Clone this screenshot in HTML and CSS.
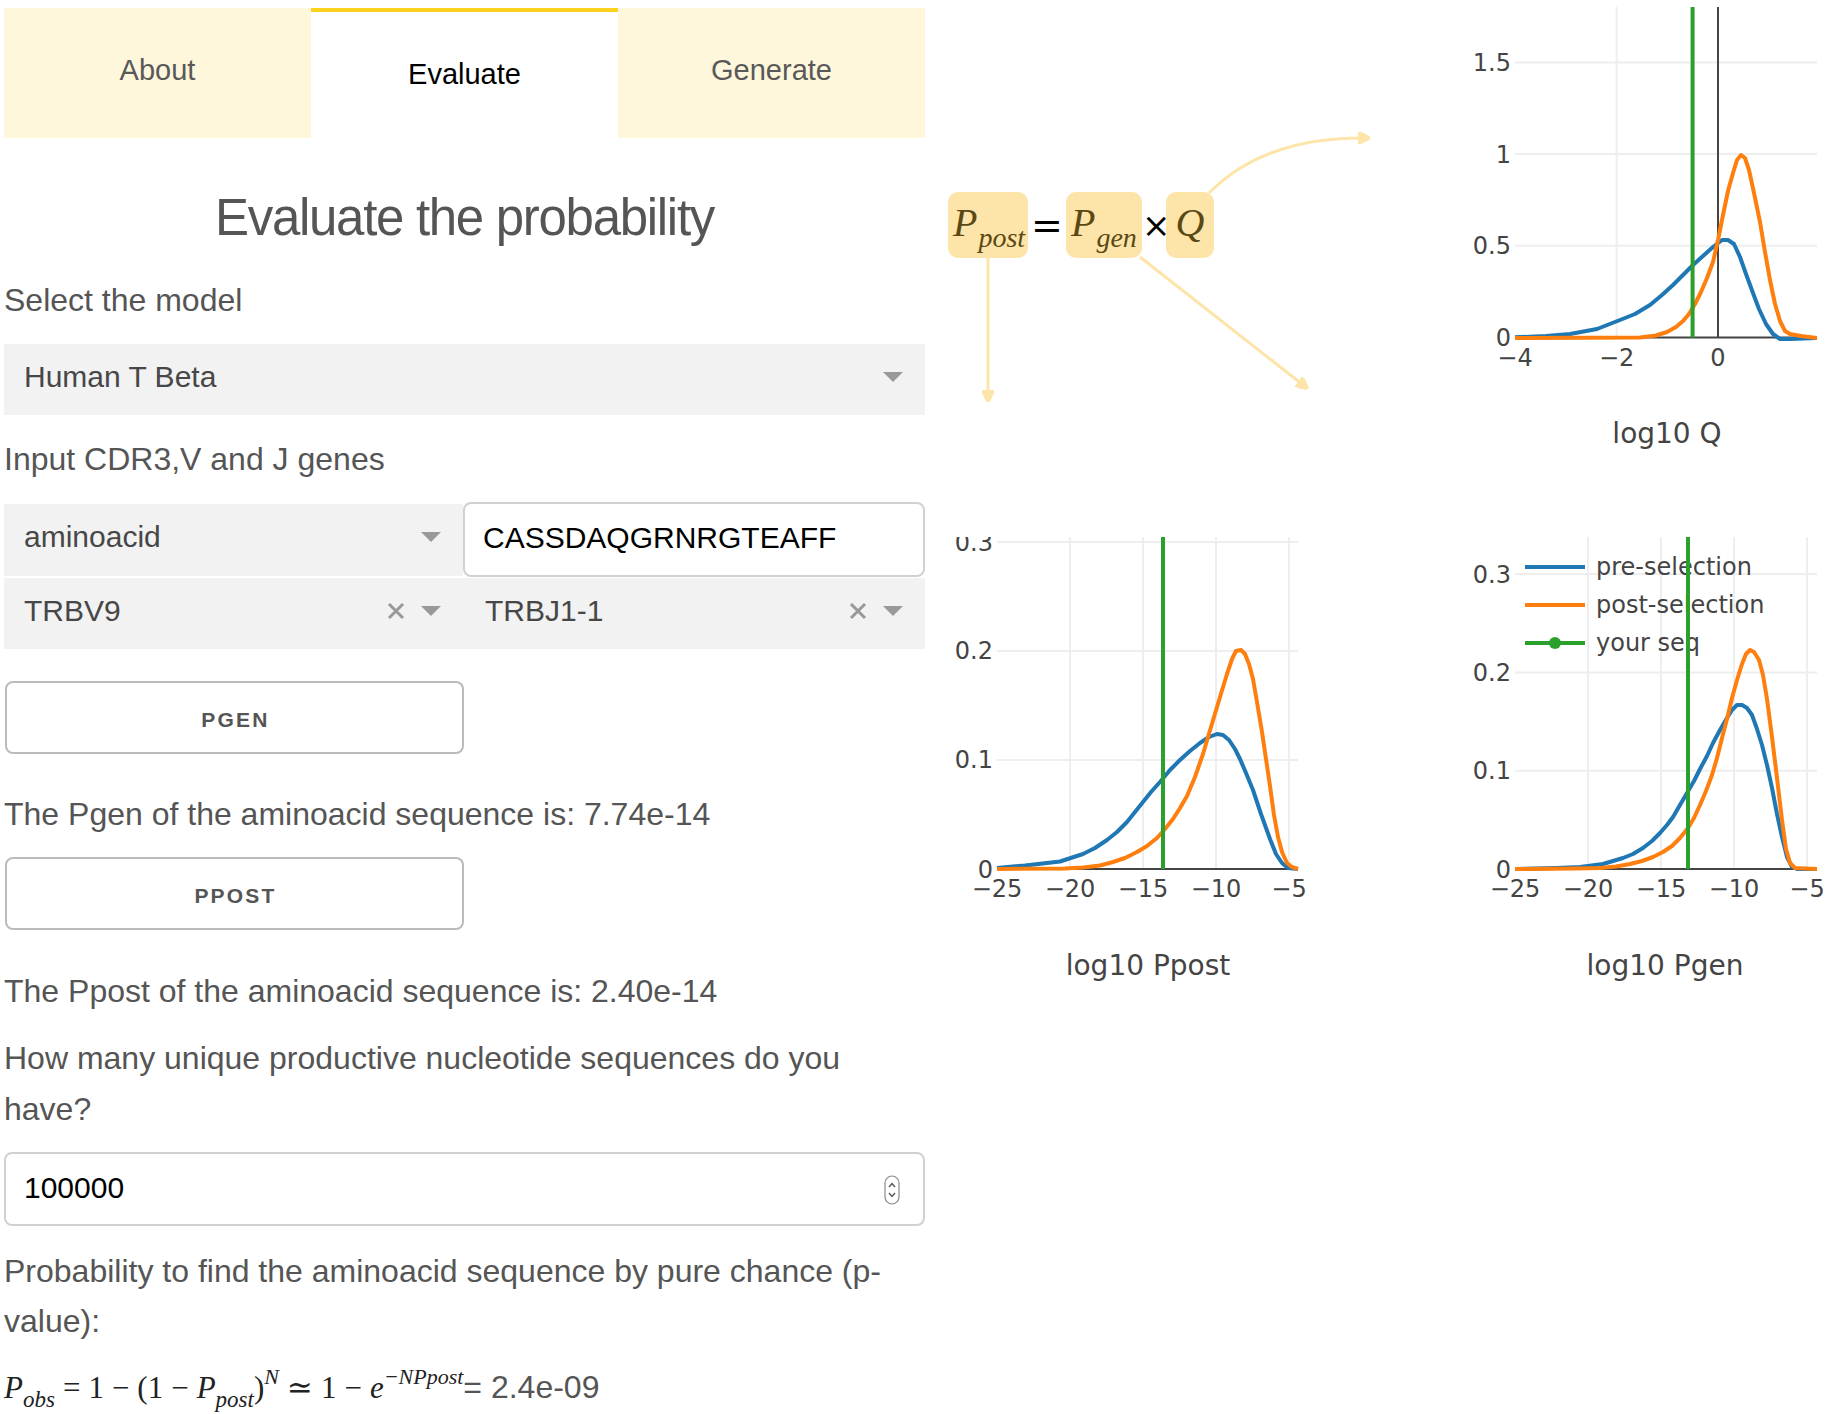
FILE: index.html
```html
<!DOCTYPE html>
<html lang="en">
<head>
<meta charset="utf-8">
<title>Evaluate the probability</title>
<link rel="stylesheet" href="styles.css">
</head>
<body>
<div class="page">
  <main class="left">
    <nav class="tabs">
      <div class="tab">About</div>
      <div class="tab tab--active">Evaluate</div>
      <div class="tab">Generate</div>
    </nav>

    <h4 class="title">Evaluate the probability</h4>

    <p class="text text--model">Select the model</p>
    <div class="select select--model">
      <span class="select__value">Human T Beta</span>
      <span class="select__arrow"></span>
    </div>

    <p class="text text--genes">Input CDR3,V and J genes</p>
    <div class="genes">
      <div class="genes__row genes__row--seq">
        <div class="select select--half">
          <span class="select__value">aminoacid</span>
          <span class="select__arrow"></span>
        </div>
        <input class="field field--seq" type="text" value="CASSDAQGRNRGTEAFF">
      </div>
      <div class="genes__row genes__row--vj">
        <div class="select select--half">
          <span class="select__value">TRBV9</span>
          <svg class="select__clear" width="18" height="18" viewBox="0 0 18 18"><path d="M2 2L16 16M16 2L2 16"/></svg>
          <span class="select__arrow"></span>
        </div>
        <div class="select select--half">
          <span class="select__value">TRBJ1-1</span>
          <svg class="select__clear" width="18" height="18" viewBox="0 0 18 18"><path d="M2 2L16 16M16 2L2 16"/></svg>
          <span class="select__arrow"></span>
        </div>
      </div>
    </div>

    <button class="btn btn--pgen" type="button">Pgen</button>
    <p class="text text--result">The Pgen of the aminoacid sequence is: 7.74e-14</p>

    <button class="btn btn--ppost" type="button">Ppost</button>
    <p class="text text--result text--result-post">The Ppost of the aminoacid sequence is: 2.40e-14</p>

    <p class="text text--question">How many unique productive nucleotide sequences do you have?</p>
    <div class="number">
      <input class="field field--number" type="text" value="100000">
      <svg class="number__spin" width="16" height="30" viewBox="0 0 16 30">
        <rect x="1" y="1" width="14" height="28" rx="7"/>
        <path d="M5 12L8 8.5L11 12M5 18L8 21.5L11 18"/>
      </svg>
    </div>

    <p class="text text--prob">Probability to find the aminoacid sequence by pure chance (p-value):</p>
    <p class="text pvalue"><span class="math"><i>P</i><sub>obs</sub><span class="op">=</span>1<span class="op">−</span>(1<span class="op">−</span><i>P</i><sub>post</sub>)<sup>N</sup><span class="op">≃</span>1<span class="op">−</span><i>e</i><sup>−NPpost</sup></span>= 2.4e-09</p>
  </main>

  <aside class="charts">
    <!-- relation diagram: Ppost = Pgen x Q with arrows to each distribution -->
    <div class="relation">
      <svg class="relation__arrows" width="451" height="530" viewBox="0 0 451 530">
        <defs>
          <marker id="head" viewBox="0 0 12 12" refX="11" refY="6" markerWidth="4" markerHeight="4" markerUnits="strokeWidth" orient="auto">
            <path d="M0 0L12 6L0 12z" fill="#fde4a8"/>
          </marker>
        </defs>
        <path d="M63 250V394" marker-end="url(#head)"/>
        <path d="M215 250L382 381" marker-end="url(#head)"/>
        <path d="M284 186Q340 129 444 131" marker-end="url(#head)"/>
      </svg>
      <div class="formula">
        <span class="fbox fbox--post"><i>P</i><sub>post</sub></span>
        <span class="fop fop--eq">=</span>
        <span class="fbox fbox--gen"><i>P</i><sub>gen</sub></span>
        <span class="fop fop--times">×</span>
        <span class="fbox fbox--q"><i>Q</i></span>
      </div>
    </div>

    <!-- log10 Q distribution -->
    <svg class="chart" width="452" height="530" viewBox="0 0 452 530">
      <g class="grid">
        <line x1="139" x2="441" y1="238.8" y2="238.8"/>
        <line x1="139" x2="441" y1="147.1" y2="147.1"/>
        <line x1="139" x2="441" y1="55.4" y2="55.4"/>
        <line x1="240.6" x2="240.6" y1="0" y2="330.5"/>
      </g>
      <g class="zero">
        <line x1="342" x2="342" y1="0" y2="330.5"/>
        <line x1="139" x2="441" y1="330.5" y2="330.5"/>
      </g>
      <polyline class="line line--pre" points="139,330.3 170,329 194,327 221,322 244,313 259,307 274,298 286,288 297,278 307,268 317,258 327,249 337,240 346,233 352,233 358,237 364,250 370,267 377,286 383,302 390,317 397,327 404,332 414,332 441,331"/>
      <polyline class="line line--post" points="139,331 264,330.5 280,328.5 291,325 300,320 307,314 313,307 319,297 325,285 331,271 337,255 342,233 347,208 352,184 357,166 361,153 365,148 369,151 373,163 378,186 384,215 389,245 394,273 399,297 404,314 409,324 414,327 425,329 441,331"/>
      <line class="line line--seq" x1="316.6" x2="316.6" y1="0" y2="330.5"/>
      <g class="tick tick--y">
        <text x="135" y="64">1.5</text>
        <text x="135" y="156">1</text>
        <text x="135" y="247">0.5</text>
        <text x="135" y="339">0</text>
      </g>
      <g class="tick tick--x">
        <text x="139" y="359">−4</text>
        <text x="240.6" y="359">−2</text>
        <text x="342" y="359">0</text>
      </g>
      <text class="axis-title" x="291" y="436">log10 Q</text>
    </svg>

    <!-- log10 Ppost distribution -->
    <svg class="chart" width="451" height="530" viewBox="0 0 451 530">
      <g class="grid">
        <line x1="72" x2="373" y1="223" y2="223"/>
        <line x1="72" x2="373" y1="114" y2="114"/>
        <line x1="72" x2="373" y1="5" y2="5"/>
        <line x1="145" x2="145" y1="0" y2="332"/>
        <line x1="218" x2="218" y1="0" y2="332"/>
        <line x1="291" x2="291" y1="0" y2="332"/>
        <line x1="364" x2="364" y1="0" y2="332"/>
      </g>
      <g class="zero">
        <line x1="72" x2="373" y1="332" y2="332"/>
      </g>
      <polyline class="line line--pre" points="72,331 100,328.5 135,324.5 158,317 170,311 182,303 192,295 202,285 210,275 218,265 226,255 235,245 245,233 255,223 265,214 275,206 284,200 292,197 298,198 304,203 310,212 315,222 321,236 328,253 336,277 345,302 351,317 357,326 363,331 373,332"/>
      <polyline class="line line--post" points="72,332 140,331.5 158,330.5 175,328.5 188,325 200,321 212,315 222,309 232,301 240,292 248,282 255,271 262,259 270,240 278,217 286,190 295,160 302,137 307,122 311,114 316,113 320,117 324,127 328,142 332,165 337,195 341,222 345,249 349,278 353,300 357,315 362,326 367,330 373,332"/>
      <line class="line line--seq" x1="238" x2="238" y1="0" y2="332"/>
      <g class="tick tick--y">
        <text x="68" y="14">0.3</text>
        <text x="68" y="122">0.2</text>
        <text x="68" y="231">0.1</text>
        <text x="68" y="341">0</text>
      </g>
      <g class="tick tick--x">
        <text x="72" y="360">−25</text>
        <text x="145" y="360">−20</text>
        <text x="218" y="360">−15</text>
        <text x="291" y="360">−10</text>
        <text x="364" y="360">−5</text>
      </g>
      <text class="axis-title" x="223" y="438">log10 Ppost</text>
    </svg>

    <!-- log10 Pgen distribution with legend -->
    <svg class="chart" width="452" height="530" viewBox="0 0 452 530">
      <g class="grid">
        <line x1="139" x2="441" y1="233.7" y2="233.7"/>
        <line x1="139" x2="441" y1="135.4" y2="135.4"/>
        <line x1="139" x2="441" y1="37.1" y2="37.1"/>
        <line x1="212" x2="212" y1="0" y2="332"/>
        <line x1="285" x2="285" y1="0" y2="332"/>
        <line x1="358" x2="358" y1="0" y2="332"/>
        <line x1="431" x2="431" y1="0" y2="332"/>
      </g>
      <g class="zero">
        <line x1="139" x2="441" y1="332" y2="332"/>
      </g>
      <polyline class="line line--pre" points="139,332 180,331 204,330 227,327 247,321 257,317 267,311 276,304 284,296 291,288 297,280 304,268 311,256 318,244 324,232 331,219 337,206 344,193 351,181 356,173 361,168 366,168 371,171 376,178 381,192 386,208 391,228 396,251 401,277 406,300 411,320 416,330 421,332 441,332"/>
      <polyline class="line line--post" points="139,332 200,331.5 224,331 240,329.5 254,327 266,324 277,320 287,315 296,309 304,301 312,291 318,281 324,268 330,254 336,238 341,221 346,201 351,182 356,161 361,143 366,127 370,117 374,113 378,115 383,123 387,138 391,162 396,200 401,241 406,283 410,312 414,326 419,331 441,332"/>
      <g class="legend">
        <line class="line line--pre" x1="149" x2="209" y1="30" y2="30"/>
        <text x="220" y="38">pre-selection</text>
        <line class="line line--post" x1="149" x2="209" y1="68" y2="68"/>
        <text x="220" y="76">post-selection</text>
        <line class="line line--seq" x1="149" x2="209" y1="106" y2="106"/>
        <circle cx="179" cy="106" r="6" fill="#2ca02c"/>
        <text x="220" y="114">your seq</text>
      </g>
      <line class="line line--seq" x1="312" x2="312" y1="0" y2="332"/>
      <g class="tick tick--y">
        <text x="135" y="46">0.3</text>
        <text x="135" y="144">0.2</text>
        <text x="135" y="242">0.1</text>
        <text x="135" y="341">0</text>
      </g>
      <g class="tick tick--x">
        <text x="139" y="360">−25</text>
        <text x="212" y="360">−20</text>
        <text x="285" y="360">−15</text>
        <text x="358" y="360">−10</text>
        <text x="431" y="360">−5</text>
      </g>
      <text class="axis-title" x="289" y="438">log10 Pgen</text>
    </svg>
  </aside>
</div>
</body>
</html>
```

FILE: styles.css
```css
* {
  box-sizing: border-box;
}

html,
body {
  margin: 0;
  padding: 0;
  background: #fff;
}

body {
  font-family: "Liberation Sans", Arial, Helvetica, sans-serif;
  color: #555;
  width: 1828px;
  height: 1414px;
  overflow: hidden;
}

.page {
  display: flex;
  align-items: flex-start;
}

/* ---------- left form column ---------- */

.left {
  flex: none;
  width: 921px;
  margin-left: 4px;
  padding-top: 8px;
}

.tabs {
  display: flex;
  height: 130px;
}

.tab {
  flex: 1;
  display: flex;
  align-items: center;
  justify-content: center;
  padding-bottom: 6px;
  background: #fff7dc;
  color: #595959;
  font-size: 29px;
}

.tab--active {
  background: #fff;
  color: #000;
  border-top: 4px solid #fdd21f;
  padding-bottom: 1px;
}

.title {
  margin: 47px 0 0;
  font-size: 51px;
  font-weight: normal;
  line-height: 66px;
  letter-spacing: -1.3px;
  text-align: center;
  color: #555;
}

.text {
  margin: 0;
  font-size: 32px;
  line-height: 51px;
}

.text--model {
  margin-top: 23.5px;
}

.text--genes {
  margin-top: 18.5px;
}

.text--result {
  margin-top: 34.5px;
}

.text--result-post {
  margin-top: 36.5px;
}

.text--question {
  margin-top: 16px;
  line-height: 50.5px;
}

.text--prob {
  margin-top: 19.5px;
  line-height: 50.5px;
}

/* dropdowns */

.select {
  position: relative;
  display: flex;
  align-items: center;
  padding: 0 20px 6px;
  background: #f2f2f2;
  font-size: 30px;
  color: #474747;
}

.select__value {
  flex: 1;
}

.select__clear {
  flex: none;
  margin-right: 16px;
  stroke: #999;
  stroke-width: 3;
}

.select__arrow {
  flex: none;
  width: 0;
  height: 0;
  margin-right: 2px;
  border-left: 10px solid transparent;
  border-right: 10px solid transparent;
  border-top: 10px solid #999;
}

.select--model {
  margin-top: 18.5px;
  height: 71px;
}

.genes {
  margin-top: 17.5px;
}

.genes__row {
  display: flex;
}

.genes__row--seq {
  height: 75px;
  align-items: center;
}

.genes__row--seq .select {
  height: 72px;
}

.genes__row--vj {
  margin-top: 1px;
  height: 71px;
}

.select--half {
  width: 459px;
  flex: none;
}

.genes__row--vj .select--half + .select--half {
  width: 462px;
  padding-left: 22px;
}

/* text fields */

.field {
  font-family: "Liberation Sans", Arial, Helvetica, sans-serif;
  font-size: 30px;
  color: #000;
  background: #fff;
  border: 2px solid #d1d1d1;
  border-radius: 8px;
  padding: 0 18px 4px;
  outline: none;
}

.field--seq {
  width: 462px;
  height: 75px;
  margin-left: 0;
}

.number {
  position: relative;
  margin-top: 18px;
  height: 74px;
}

.field--number {
  width: 100%;
  height: 100%;
  padding-bottom: 2px;
}

.number__spin {
  position: absolute;
  right: 25px;
  top: 23px;
  fill: #fff;
  stroke: #8a8a8a;
  stroke-width: 1.2;
}

.number__spin path {
  fill: none;
  stroke: #555;
  stroke-width: 1.4;
}

/* buttons */

.btn {
  display: block;
  width: 459px;
  height: 73px;
  margin: 32px 0 0 1px;
  padding: 5px 0 0;
  background: transparent;
  border: 2px solid #bbb;
  border-radius: 8px;
  color: #555;
  font-family: "Liberation Sans", Arial, Helvetica, sans-serif;
  font-size: 21px;
  font-weight: bold;
  letter-spacing: 2.2px;
  text-transform: uppercase;
  text-indent: 2px;
}

.btn--ppost {
  margin-top: 17px;
}

/* p-value formula */

.pvalue {
  margin-top: 15.5px;
  white-space: nowrap;
}

.math {
  font-family: "Liberation Serif", "DejaVu Serif", serif;
  font-size: 31px;
  color: #222;
}

.math i,
.math sub,
.math sup {
  font-style: italic;
}

.math sub {
  font-size: 23px;
  vertical-align: -9px;
  line-height: 0;
}

.math sup {
  font-size: 22px;
  vertical-align: 14px;
  line-height: 0;
}

.math .op {
  margin: 0 8px;
}

/* ---------- right chart column ---------- */

.charts {
  flex: none;
  width: 903px;
  padding-top: 7px;
  display: grid;
  grid-template-columns: 451px 452px;
  grid-template-rows: 530px 530px;
}

.relation {
  position: relative;
  width: 451px;
  height: 530px;
}

.relation__arrows {
  position: absolute;
  left: 0;
  top: 0;
  fill: none;
  stroke: #fde4a8;
  stroke-width: 3;
}

.formula {
  position: relative;
  display: flex;
  align-items: flex-start;
  padding: 185px 0 0 23px;
  font-family: "Liberation Serif", "DejaVu Serif", serif;
}

.fbox {
  display: block;
  height: 66px;
  padding-left: 5px;
  border-radius: 10px;
  background: #fde4a8;
  color: #5b4914;
  font-size: 40px;
  line-height: 61px;
  white-space: nowrap;
}

.fbox i {
  font-style: italic;
}

.fbox sub {
  font-style: italic;
  font-size: 28px;
  line-height: 0;
  vertical-align: -11px;
  margin-left: 1px;
}

.fbox--post {
  width: 80px;
}

.fbox--gen {
  width: 76px;
}

.fbox--q {
  width: 48px;
  text-align: center;
  padding-left: 0;
}

.fop {
  color: #000;
  text-align: center;
  font-family: "DejaVu Sans", sans-serif;
  line-height: 66px;
}

.fop--eq {
  width: 38px;
  font-size: 38px;
}

.fop--times {
  width: 24px;
  font-size: 34px;
}

.chart {
  display: block;
  overflow: hidden;
}

.grid line {
  stroke: #eee;
  stroke-width: 2;
}

.zero line {
  stroke: #444;
  stroke-width: 2;
}

.line {
  fill: none;
  stroke-width: 4;
  stroke-linejoin: round;
  stroke-linecap: butt;
}

.line--pre {
  stroke: #1f77b4;
}

.line--post {
  stroke: #ff7f0e;
}

.line--seq {
  stroke: #2ca02c;
}

.tick text,
.legend text,
.axis-title {
  font-family: "DejaVu Sans", Verdana, sans-serif;
  fill: #444;
}

.tick text,
.legend text {
  font-size: 24px;
}

.tick--y text {
  text-anchor: end;
}

.tick--x text {
  text-anchor: middle;
}

.axis-title {
  font-size: 28px;
  text-anchor: middle;
}
```
